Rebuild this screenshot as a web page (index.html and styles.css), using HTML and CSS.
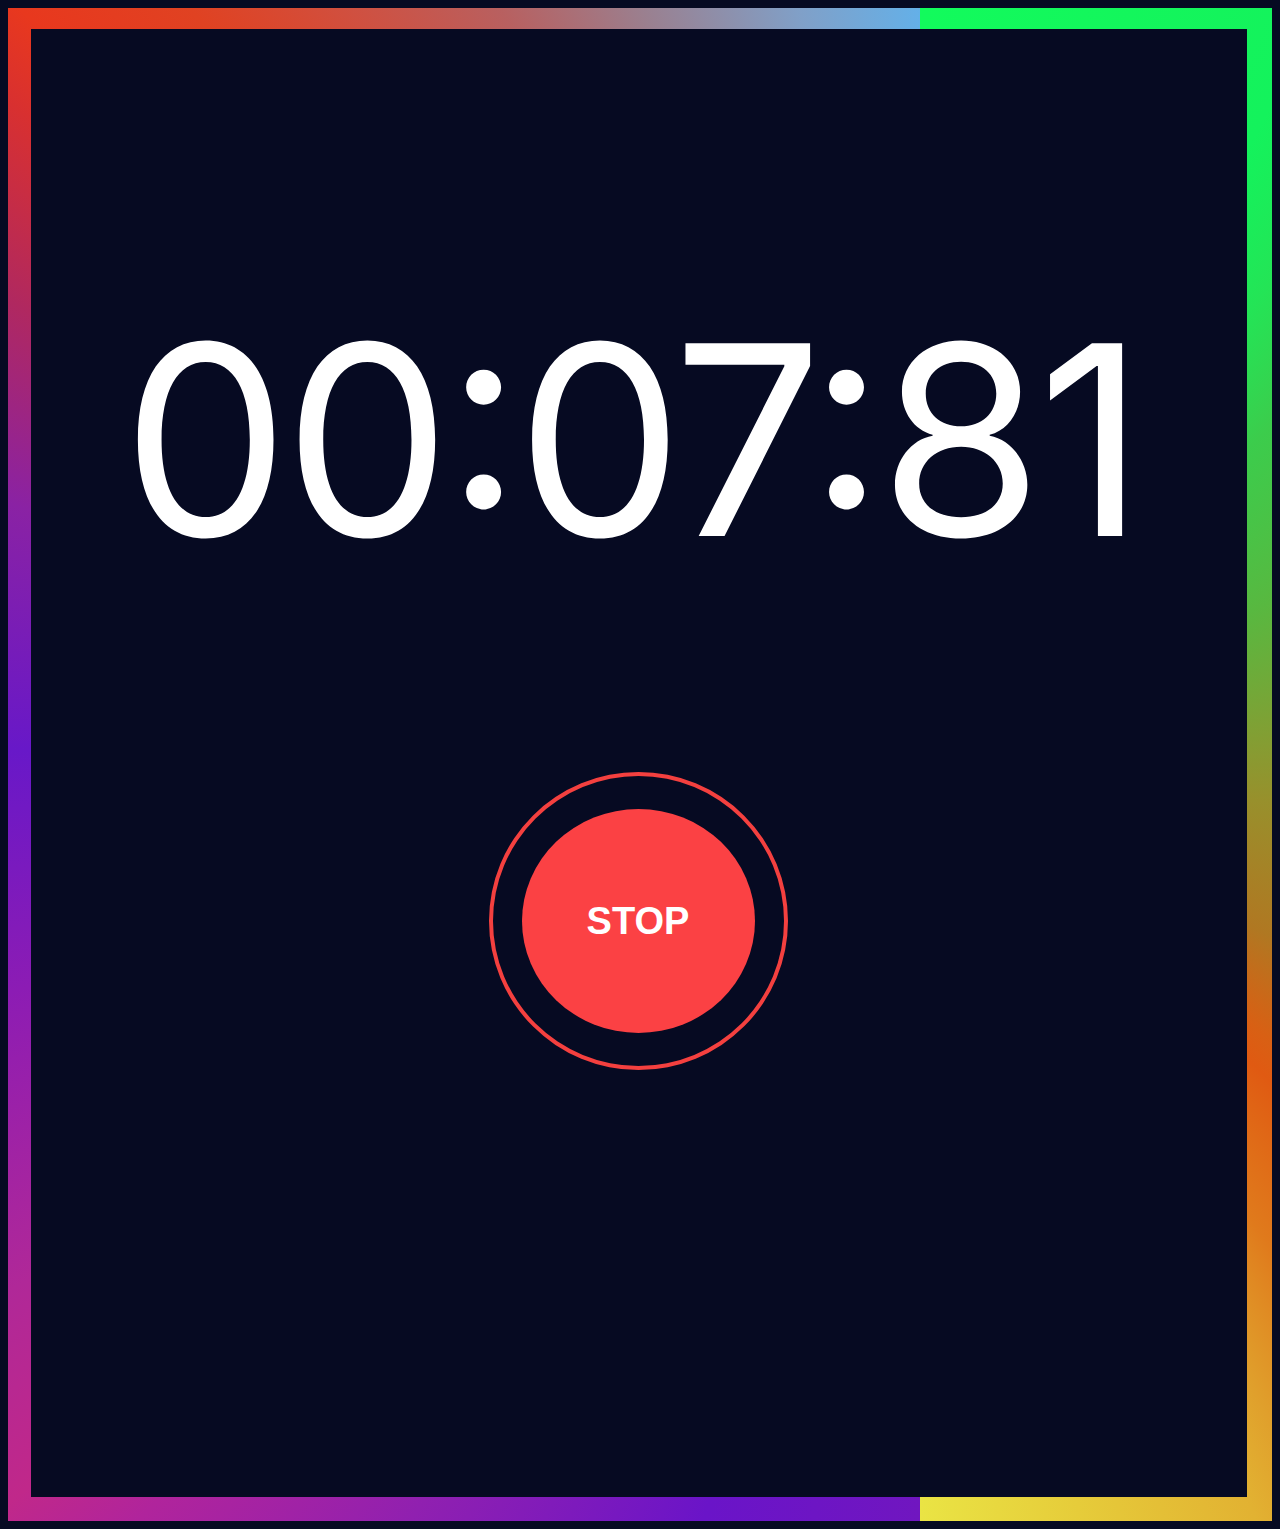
FILE: index.html
```html
<!DOCTYPE html>
<html lang="en">
<head>
<meta charset="utf-8">
<title>Stopwatch</title>
<link rel="stylesheet" href="styles.css">
</head>
<body>
<div class="frame">
  <main class="screen">
    <div class="time">00:07:81</div>
    <div class="ring">
      <button class="stop">STOP</button>
    </div>
  </main>
</div>
</body>
</html>
```

FILE: styles.css
```css
html, body {
  margin: 0;
  padding: 0;
  background: #060a22;
}

body {
  padding: 8px;
  box-sizing: border-box;
  height: 1529px;
}

.frame {
  box-sizing: border-box;
  height: 1513px;
  padding: 21px 25px 24px 23px;
  background: conic-gradient(from 0deg at 912px 757px,
    #12fb5c 0deg,
    #14f25c 28deg,
    #24e456 36deg,
    #3ccc4c 46deg,
    #58b840 65deg,
    #80a034 84deg,
    #98902c 96deg,
    #b07822 116deg,
    #d86014 128deg,
    #e05a12 132deg,
    #e07a1c 144deg,
    #e0a02c 152deg,
    #e2b232 156deg,
    #e6cc3a 168deg,
    #eae444 180deg,
    #7016c0 180deg,
    #6a14c8 196deg,
    #9020b0 214deg,
    #b0249c 226deg,
    #c0288a 231deg,
    #b02898 240deg,
    #8c1cb4 256deg,
    #6818c8 271deg,
    #8a22a4 286deg,
    #b02860 297deg,
    #d83030 306deg,
    #e8381e 310deg,
    #e04222 316deg,
    #d05040 323deg,
    #b86060 331deg,
    #9a8090 340deg,
    #80a0c8 351deg,
    #64b0e8 360deg);
}

.screen {
  height: 100%;
  background: #060a22;
  display: flex;
  flex-direction: column;
  align-items: center;
}

.time {
  margin-top: 278px;
  font-family: "Inter", "Liberation Sans", sans-serif;
  font-weight: 400;
  font-size: 265px;
  line-height: 1;
  letter-spacing: -5.5px;
  font-feature-settings: "case" 1;
  color: #ffffff;
  white-space: nowrap;
  transform: translateX(-8px);
}

.ring {
  margin-top: 200px;
  box-sizing: border-box;
  width: 299px;
  height: 298px;
  border: 4px solid #f4403f;
  border-radius: 50%;
  display: flex;
  align-items: center;
  justify-content: center;
  transform: translateX(-1px);
}

.stop {
  width: 233px;
  height: 224px;
  border: none;
  border-radius: 50%;
  background: #fb4144;
  color: #ffffff;
  font-family: "Liberation Sans", Arial, sans-serif;
  font-weight: 700;
  font-size: 38px;
  padding: 0;
  cursor: pointer;
}
```
